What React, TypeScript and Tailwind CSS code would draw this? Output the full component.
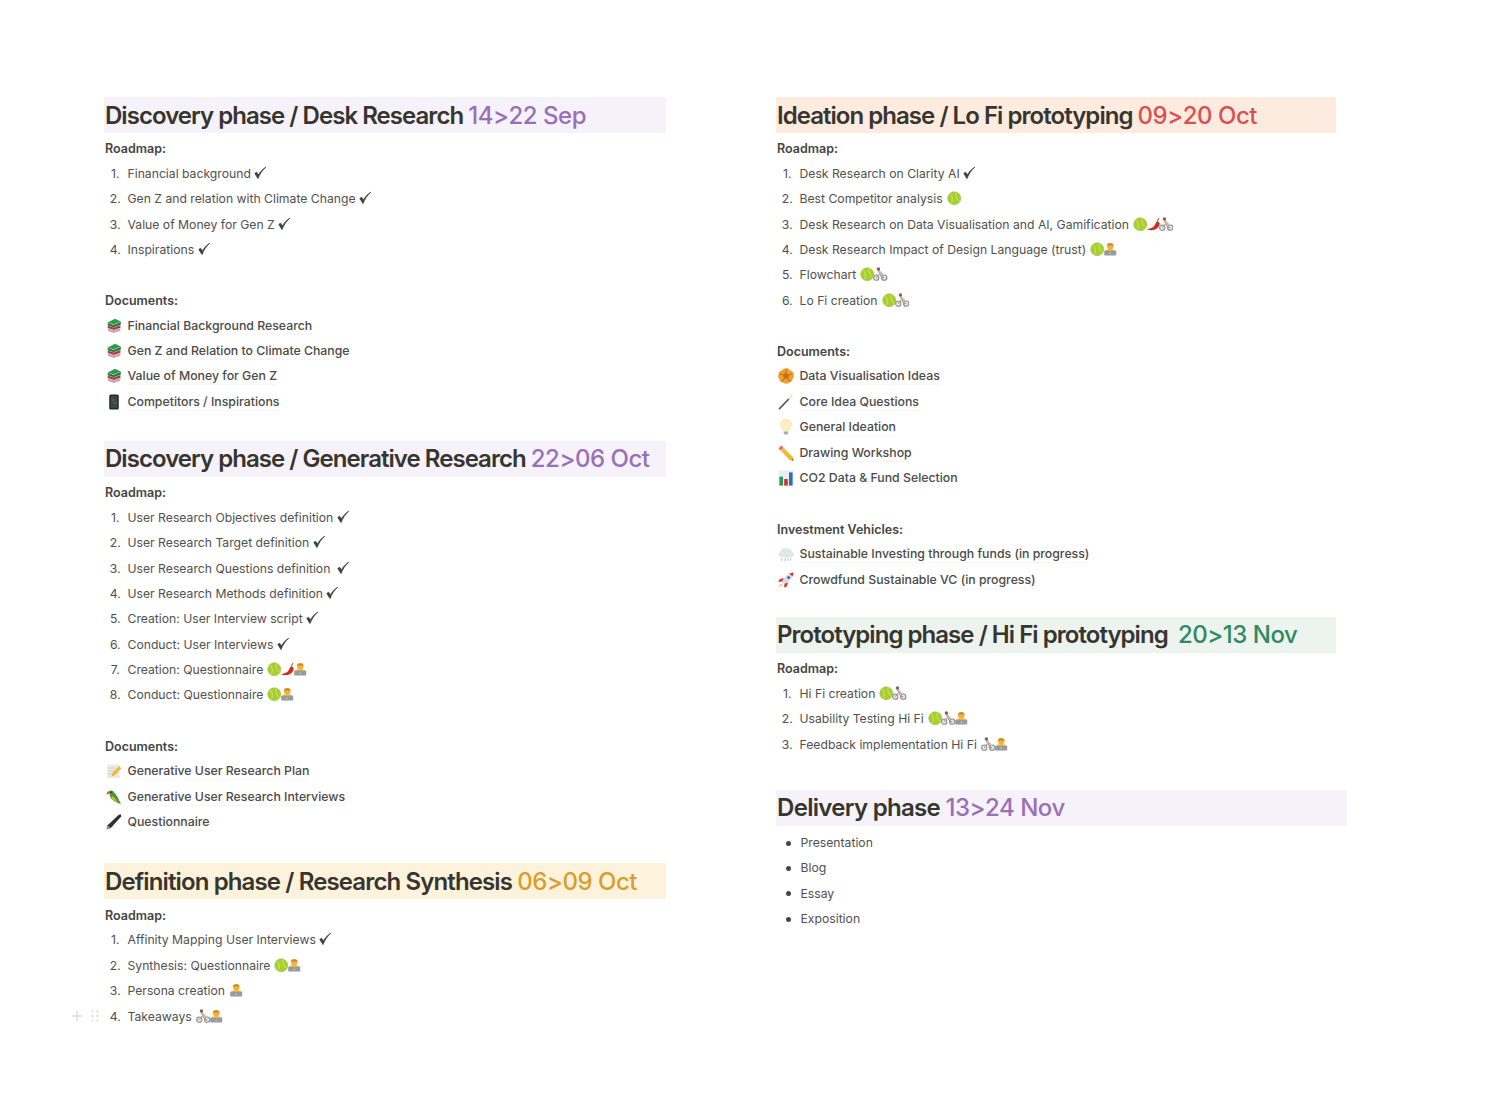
import React from 'react';

type IconName = 'check' | 'ball' | 'chili' | 'bike' | 'tech' | 'books' | 'phone' | 'memo' | 'parrot' | 'pen' | 'rosette' | 'wand' | 'bulb' | 'pencil' | 'chart' | 'cloud' | 'rocket';

const Check = () => (
  <svg viewBox="0 0 14 14" className="inline-block w-[14px] h-[14px] align-[-2px]">
    <path d="M1.8 7.4 L5 12.6 C6.6 8.4 9 4.4 12.8 1.2 C9.4 3.2 7 6.2 5.3 9 L3.6 6.2 Z" fill="#3f3f3e" stroke="#3f3f3e" strokeWidth="0.8" strokeLinejoin="round" />
  </svg>
);

const glyphs: Record<Exclude<IconName, 'check'>, React.ReactNode> = {
  ball: (
    <>
      <circle cx="8" cy="8" r="7.2" fill="#a9cf2d" />
      <path d="M3 3 C6.6 6 6.8 10.8 4.2 14 M10.4 1.2 C9 5.6 10.8 10.8 14.8 11.4" fill="none" stroke="#d3e58c" strokeWidth="0.9" />
      <circle cx="8" cy="8" r="7.2" fill="none" stroke="#8fb526" strokeWidth="0.5" />
    </>
  ),
  chili: (
    <>
      <path d="M0.8 13.4 C5.6 13 9.4 11.4 10.8 6.4 C11.4 4.8 14.6 4.8 15 7 C15.4 11.6 8.4 16.8 0.8 13.4 Z" fill="#d32a22" />
      <path d="M12.6 5.4 C12.8 3.8 13.4 2.4 14.4 1.2" fill="none" stroke="#6a8f2b" strokeWidth="1.4" />
    </>
  ),
  bike: (
    <>
      <circle cx="3.6" cy="11.8" r="2.9" fill="#e6e6e4" stroke="#8b9093" strokeWidth="1.2" />
      <circle cx="12.4" cy="11.8" r="2.9" fill="#e6e6e4" stroke="#8b9093" strokeWidth="1.2" />
      <path d="M3.6 11.8 L7 7.4 L10 11.8 L12.4 11.8" fill="none" stroke="#9a8d85" strokeWidth="1.1" />
      <path d="M6 3.8 L9 7.8 L10.8 8.4" fill="none" stroke="#cfb09a" strokeWidth="2.6" />
      <circle cx="6" cy="2.2" r="1.9" fill="#7d6357" />
    </>
  ),
  tech: (
    <>
      <circle cx="8" cy="4.6" r="3.6" fill="#f2b33c" />
      <path d="M4.2 3.8 C4.8 .6 11.2 .6 11.8 3.8 Z" fill="#c58a2c" />
      <path d="M1.8 10 C2.4 7.4 13.6 7.4 14.2 10 L14.2 14 L1.8 14 Z" fill="#e5b043" />
      <rect x="1.4" y="9.8" width="13.2" height="5" rx="0.6" fill="#969b9e" />
      <circle cx="8" cy="12.3" r="0.8" fill="#d4d6d8" />
    </>
  ),
  books: (
    <>
      <path d="M1.6 4.4 L9 .8 L14.8 3.4 L7.6 6.6 Z" fill="#2f9a4c" />
      <path d="M1.6 4.8 L7.6 7 L14.8 3.8 L14.8 6.4 L7.6 9.2 L1.8 7.2 Z" fill="#1f7a39" />
      <path d="M1.6 7.4 L7.8 9.4 L14.4 7 L14.4 9.8 L7.8 12 L1.8 10 Z" fill="#ad3f3a" />
      <path d="M1.8 10.2 L7.8 12.2 L14.4 10 L14.4 12.8 L7.8 15 L2 13 Z" fill="#c7a4c0" />
    </>
  ),
  phone: (
    <>
      <rect x="3.2" y="0.4" width="9.6" height="15.2" rx="1.6" fill="#232a2a" />
      <rect x="4.4" y="2" width="7.2" height="12" fill="#3c4644" />
      <circle cx="7.2" cy="6" r="0.7" fill="#7f8f88" />
      <circle cx="9" cy="9" r="0.7" fill="#7f8f88" />
    </>
  ),
  memo: (
    <>
      <rect x="1.2" y="1.6" width="12.4" height="13.4" rx="0.8" fill="#e9e9e6" />
      <path d="M3 5 H10.4 M3 7.8 H8 M3 10.6 H6.4" stroke="#c9c9c4" strokeWidth="0.8" />
      <path d="M5.4 13.4 L6.6 9.8 L13 3 L15.4 5.2 L9 12.2 Z" fill="#eeb93a" />
    </>
  ),
  parrot: (
    <>
      <path d="M2.6 3.4 C3.2 1 6.6 .8 7.8 3 C10 5.2 12.4 9 15 15.2 C11 13.2 7.4 12.2 5 9.4 C4 7.8 4 6 3.8 5.2 Z" fill="#3f9b3c" />
      <path d="M6 7 C8 8 10 10.4 11.6 13 C9 12 6.6 10.8 5.4 9.2 Z" fill="#e8b32e" />
      <path d="M.8 4.6 C.8 2.8 2.2 2 3.4 2.4 L3.8 5 C2.6 4.6 1.6 5 .8 6.4 Z" fill="#d9602b" />
      <circle cx="5" cy="3.2" r="0.7" fill="#111" />
    </>
  ),
  pen: (
    <>
      <path d="M.6 15.4 L1.6 11.2 L12.8 .8 L15 .4 L15.2 2.6 L4.8 14 Z" fill="#2c2f33" />
      <path d="M.6 15.4 L1.6 11.2 L4.8 14 Z" fill="#8f9498" />
    </>
  ),
  rosette: (
    <>
      <path d="M8 .2 C10 -.2 11.6 1.2 12.2 2.4 C14.2 2.6 15.6 4.2 15.6 6 C16.4 8 15.8 10 14.6 11.2 C14.2 13 12.4 14.8 10.4 15 C8.6 16.2 6.8 15.8 5.4 14.8 C3.4 14.6 1.6 13 1.4 11.2 C-.2 9.6 -.2 7.6 .8 6 C.6 4.2 2.2 2.6 4 2.4 C4.8 1 6.4 0 8 .2 Z" fill="#eda22d" />
      <path d="M8 4.4 L11.2 6.8 L10 10.8 L6 10.8 L4.8 6.8 Z" fill="#c96f16" />
      <path d="M8 1.2 V4.4 M14.4 5.8 L11.2 6.8 M12.2 13.6 L10 10.8 M3.8 13.6 L6 10.8 M1.6 5.8 L4.8 6.8" stroke="#c96f16" strokeWidth="1.1" />
    </>
  ),
  wand: (
    <>
      <path d="M1 15.2 L10.8 5" stroke="#55595c" strokeWidth="1.7" />
      <path d="M10.8 5 L12.4 3.4" stroke="#d8d8d4" strokeWidth="1.8" />
      <circle cx="13.4" cy="2" r="1.2" fill="#efe3b0" />
    </>
  ),
  bulb: (
    <>
      <path d="M8 .2 C11.8 .2 13.6 2.8 13.6 5.2 C13.6 8 11.4 9.6 10.8 12.2 L5.2 12.2 C4.6 9.6 2.4 8 2.4 5.2 C2.4 2.8 4.2 .2 8 .2 Z" fill="#fbf0c2" stroke="#efdf9f" strokeWidth="0.5" />
      <rect x="5.8" y="12.4" width="4.4" height="3" rx="0.8" fill="#a9adaf" />
    </>
  ),
  pencil: (
    <>
      <path d="M.6 3.4 L3.4 .6 L15 12.2 L15.8 15.8 L12.2 15 Z" fill="#f3bb34" />
      <path d="M.6 3.4 L3.4 .6 L5.2 2.4 L2.4 5.2 Z" fill="#dd6f7c" />
      <path d="M2.4 5.2 L13.6 15.4 L12.2 15 Z" fill="#c98f1f" />
      <path d="M14 14 L15.8 15.8 L13.6 15.2 Z" fill="#333" />
    </>
  ),
  chart: (
    <>
      <rect x=".4" y=".4" width="15.2" height="15.2" fill="#e9eef2" />
      <rect x="1.4" y="6.6" width="3.6" height="9" fill="#2a9a58" />
      <rect x="6.2" y="9" width="3.6" height="6.6" fill="#d5322c" />
      <rect x="11" y="2.4" width="3.6" height="13.2" fill="#2f6fb8" />
    </>
  ),
  cloud: (
    <>
      <path d="M3.4 10.6 C.4 10.6 .2 6.8 2.8 6 C3 2.8 7 1.2 9.2 3.4 C11.4 2.6 13.4 4 13.4 6 C16 6.4 16 10.6 13 10.6 Z" fill="#e3e6e8" stroke="#c9ced1" strokeWidth="0.4" />
      <path d="M4.2 11.8 L3.6 15 M7.2 11.8 L6.6 15 M10 11.8 L9.4 15 M12.8 11.8 L12.2 15" stroke="#9fd3e0" strokeWidth="1" />
    </>
  ),
  rocket: (
    <>
      <path d="M4.6 11.4 C4.6 5.8 9 1 15.6 .4 C15 7 10.2 11.4 4.6 11.4 Z" fill="#d9dde0" />
      <path d="M15.6 .4 C15.4 2 15 3.4 14.4 4.6 L11.4 1.6 C12.6 1 14 .6 15.6 .4 Z" fill="#d7352b" />
      <path d="M5.6 6 L1.6 7.2 L.4 10 L4.4 9.4 Z M10 10.4 L8.8 14.4 L6 15.6 L6.6 11.6 Z" fill="#d7352b" />
      <path d="M4.6 11.4 C2.8 12 1.6 13.6 .8 15.2 C2.4 14.4 4 13.2 4.6 11.4 Z" fill="#f2a42c" />
      <circle cx="10.6" cy="5.4" r="1.5" fill="#3e6f9e" />
    </>
  ),
};

function Icon({ name }: { name: IconName }) {
  if (name === 'check') return <Check />;
  return (
    <svg viewBox="0 0 16 16" className="inline-block w-[14.5px] h-[14.5px] align-[-2.5px] -mr-[1.5px]">
      {glyphs[name]}
    </svg>
  );
}

function Icons({ names }: { names?: IconName[] }) {
  if (!names) return null;
  return (
    <span className={names[0] === 'check' ? 'ml-[2.5px]' : 'ml-[4px]'}>
      {names.map((n, i) => (
        <Icon key={i} name={n} />
      ))}
    </span>
  );
}

type Item = { text: string; icons?: IconName[] };
type DocItem = { icon: IconName; text: string };

function Heading({ title, date, bg, color, className, tracking = 'tracking-[-0.04em]' }: { title: string; date: string; bg: string; color: string; className?: string; tracking?: string }) {
  return (
    <h2 className={`h-9 pl-[1px] pt-[1px] flex items-center whitespace-pre text-[24px] font-semibold text-[#37352f] ${tracking} ${bg} ${className ?? ''}`}>
      {title}
      <span className={`font-medium tracking-[-0.02em] ${color}`}>{date}</span>
    </h2>
  );
}

function Label({ children }: { children: React.ReactNode }) {
  return <p className="h-[25.4px] pl-[1px] pt-[1.5px] flex items-center text-[12.5px] font-semibold text-[#444442]">{children}</p>;
}

function Numbered({ items, handle }: { items: Item[]; handle?: number }) {
  return (
    <ol>
      {items.map((item, i) => (
        <li key={i} className="relative h-[25.4px] flex items-center text-[12.2px] text-[#50504e] whitespace-pre">
          {handle === i && (
            <span className="absolute left-[-33px] top-[6px] flex items-center gap-[8px]">
              <svg viewBox="0 0 12 12" className="w-3 h-3">
                <path d="M6 1 V11 M1 6 H11" stroke="#cfcfcd" strokeWidth="1.1" />
              </svg>
              <svg viewBox="0 0 8 12" className="w-2 h-3" fill="#d6d6d4">
                <circle cx="1.5" cy="1.5" r="1" />
                <circle cx="6.5" cy="1.5" r="1" />
                <circle cx="1.5" cy="6" r="1" />
                <circle cx="6.5" cy="6" r="1" />
                <circle cx="1.5" cy="10.5" r="1" />
                <circle cx="6.5" cy="10.5" r="1" />
              </svg>
            </span>
          )}
          <span className="w-[22.5px] mr-[1px] text-center shrink-0">{i + 1}.</span>
          {item.text}
          <Icons names={item.icons} />
        </li>
      ))}
    </ol>
  );
}

function Docs({ items }: { items: DocItem[] }) {
  return (
    <ul className="-mt-[0.6px] mb-[0.6px]">
      {items.map((d, i) => (
        <li key={i} className="h-[25.4px] flex items-center text-[12.3px] font-medium text-[#4a4a48] whitespace-pre">
          <span className="w-[23.5px] pl-[2px] shrink-0 flex items-center [&>svg]:w-[16px] [&>svg]:h-[16px]">
            <Icon name={d.icon} />
          </span>
          <span className="border-b border-[#f6f6f5] leading-[17px]">{d.text}</span>
        </li>
      ))}
    </ul>
  );
}

export default function App() {
  return (
    <div className="min-h-screen bg-white flex pt-[97px] font-['Inter',sans-serif]">
      <div className="ml-[104px] w-[562px]">
        <Heading title="Discovery phase / Desk Research " date="14>22 Sep" bg="bg-[#f5f3f9]" color="text-[#9b6fb8]" />
        <div className="mt-[2.8px]">
          <Label>Roadmap:</Label>
          <Numbered
            items={[
              { text: 'Financial background', icons: ['check'] },
              { text: 'Gen Z and relation with Climate Change', icons: ['check'] },
              { text: 'Value of Money for Gen Z', icons: ['check'] },
              { text: 'Inspirations', icons: ['check'] },
            ]}
          />
          <div className="h-[25.4px]" />
          <Label>Documents:</Label>
          <Docs
            items={[
              { icon: 'books', text: 'Financial Background Research' },
              { icon: 'books', text: 'Gen Z and Relation to Climate Change' },
              { icon: 'books', text: 'Value of Money for Gen Z' },
              { icon: 'phone', text: 'Competitors / Inspirations' },
            ]}
          />
        </div>

        <Heading className="mt-[26px]" title="Discovery phase / Generative Research " date="22>06 Oct" bg="bg-[#f5f3f9]" color="text-[#9b6fb8]" />
        <div className="mt-[3.3px]">
          <Label>Roadmap:</Label>
          <Numbered
            items={[
              { text: 'User Research Objectives definition', icons: ['check'] },
              { text: 'User Research Target definition', icons: ['check'] },
              { text: 'User Research Questions definition ', icons: ['check'] },
              { text: 'User Research Methods definition', icons: ['check'] },
              { text: 'Creation: User Interview script', icons: ['check'] },
              { text: 'Conduct: User Interviews', icons: ['check'] },
              { text: 'Creation: Questionnaire', icons: ['ball', 'chili', 'tech'] },
              { text: 'Conduct: Questionnaire', icons: ['ball', 'tech'] },
            ]}
          />
          <div className="h-[25.4px]" />
          <Label>Documents:</Label>
          <Docs
            items={[
              { icon: 'memo', text: 'Generative User Research Plan' },
              { icon: 'parrot', text: 'Generative User Research Interviews' },
              { icon: 'pen', text: 'Questionnaire' },
            ]}
          />
        </div>

        <Heading className="mt-[28.5px]" tracking="tracking-[-0.0365em]" title="Definition phase / Research Synthesis " date="06>09 Oct" bg="bg-[#fdf3dc]" color="text-[#d99e2b]" />
        <div className="mt-[3.3px]">
          <Label>Roadmap:</Label>
          <Numbered
            handle={3}
            items={[
              { text: 'Affinity Mapping User Interviews', icons: ['check'] },
              { text: 'Synthesis: Questionnaire', icons: ['ball', 'tech'] },
              { text: 'Persona creation', icons: ['tech'] },
              { text: 'Takeaways', icons: ['bike', 'tech'] },
            ]}
          />
        </div>
      </div>

      <div className="ml-[110px] w-[571px]">
        <Heading className="w-[560px]" title="Ideation phase / Lo Fi prototyping " date="09>20 Oct" bg="bg-[#fdebe0]" color="text-[#d9514e]" />
        <div className="mt-[2.8px]">
          <Label>Roadmap:</Label>
          <Numbered
            items={[
              { text: 'Desk Research on Clarity AI', icons: ['check'] },
              { text: 'Best Competitor analysis', icons: ['ball'] },
              { text: 'Desk Research on Data Visualisation and AI, Gamification', icons: ['ball', 'chili', 'bike'] },
              { text: 'Desk Research Impact of Design Language (trust)', icons: ['ball', 'tech'] },
              { text: 'Flowchart', icons: ['ball', 'bike'] },
              { text: 'Lo Fi creation', icons: ['ball', 'bike'] },
            ]}
          />
          <div className="h-[25.4px]" />
          <Label>Documents:</Label>
          <Docs
            items={[
              { icon: 'rosette', text: 'Data Visualisation Ideas' },
              { icon: 'wand', text: 'Core Idea Questions' },
              { icon: 'bulb', text: 'General Ideation' },
              { icon: 'pencil', text: 'Drawing Workshop' },
              { icon: 'chart', text: 'CO2 Data & Fund Selection' },
            ]}
          />
          <div className="h-[25.4px]" />
          <Label>Investment Vehicles:</Label>
          <Docs
            items={[
              { icon: 'cloud', text: 'Sustainable Investing through funds (in progress)' },
              { icon: 'rocket', text: 'Crowdfund Sustainable VC (in progress)' },
            ]}
          />
        </div>

        <Heading className="w-[560px] mt-[24.5px]" title="Prototyping phase / Hi Fi prototyping  " date="20>13 Nov" bg="bg-[#edf3ee]" color="text-[#2f8a63]" />
        <div className="mt-[3.3px]">
          <Label>Roadmap:</Label>
          <Numbered
            items={[
              { text: 'Hi Fi creation', icons: ['ball', 'bike'] },
              { text: 'Usability Testing Hi Fi', icons: ['ball', 'bike', 'tech'] },
              { text: 'Feedback implementation Hi Fi', icons: ['bike', 'tech'] },
            ]}
          />
        </div>

        <Heading className="mt-[32px]" tracking="tracking-[-0.029em]" title="Delivery phase " date="13>24 Nov" bg="bg-[#f5f3f9]" color="text-[#9b6fb8]" />
        <ul className="mt-[4.8px]">
          {['Presentation', 'Blog', 'Essay', 'Exposition'].map((t) => (
            <li key={t} className="h-[25.4px] flex items-center text-[12.2px] text-[#50504e]">
              <span className="w-[24.5px] flex justify-center shrink-0">
                <span className="w-[5px] h-[5px] rounded-full bg-[#454543]" />
              </span>
              {t}
            </li>
          ))}
        </ul>
      </div>
    </div>
  );
}
